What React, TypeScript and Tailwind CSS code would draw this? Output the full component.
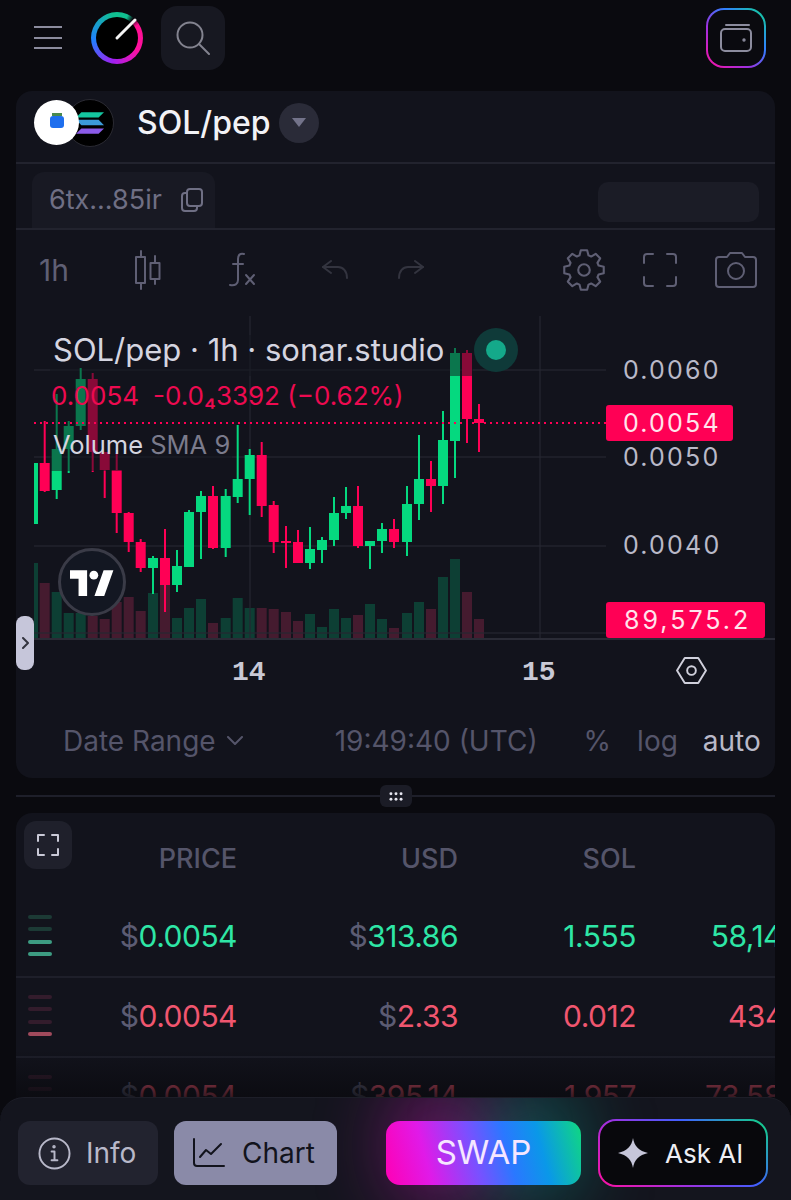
import React from 'react';

type Candle = [number, number, number, number, number, 'g' | 'r'];

const candles: Candle[] = [
  [36, 463, 524, 463, 524, 'g'],
  [44.7, 421, 492, 463, 491, 'r'],
  [56.7, 394, 499, 449, 490, 'g'],
  [68.7, 421, 473, 426, 449, 'g'],
  [80.7, 368, 430, 379, 426, 'g'],
  [92.7, 373, 472, 379, 452, 'r'],
  [104.7, 452, 498, 452, 470, 'r'],
  [116.7, 453, 533, 470, 513, 'r'],
  [128.7, 512, 552, 513, 542, 'r'],
  [140.7, 539, 572, 542, 568, 'r'],
  [153, 556, 594, 558, 568, 'g'],
  [165, 529, 612, 558, 585, 'r'],
  [177, 550, 592, 566, 585, 'g'],
  [189, 510, 567, 512, 567, 'g'],
  [201, 491, 559, 496, 512, 'g'],
  [213, 486, 549, 496, 548, 'r'],
  [225.7, 489, 557, 496, 548, 'g'],
  [237.7, 425, 503, 479, 497, 'g'],
  [249.7, 449, 515, 455, 479, 'g'],
  [261.7, 442, 517, 455, 506, 'r'],
  [273.7, 501, 553, 505, 542, 'r'],
  [286, 526, 568, 541, 543, 'r'],
  [298, 530, 563, 542, 563, 'r'],
  [310, 527, 569, 549, 563, 'g'],
  [322, 537, 563, 540, 550, 'g'],
  [334, 497, 546, 513, 540, 'g'],
  [346, 487, 519, 506, 513, 'g'],
  [358, 486, 548, 506, 546, 'r'],
  [370, 541, 569, 541, 546, 'g'],
  [382, 523, 553, 529, 541, 'g'],
  [394, 519, 548, 529, 542, 'r'],
  [407, 486, 556, 504, 542, 'g'],
  [419, 435, 520, 479, 504, 'g'],
  [431, 461, 512, 479, 486, 'r'],
  [443, 411, 504, 440, 486, 'g'],
  [455, 348, 478, 353, 441, 'g'],
  [467, 350, 443, 353, 419, 'r'],
  [479, 404, 452, 419, 423, 'r'],
];

const volumes: [number, number, 'g' | 'r'][] = [
  [36, 563, 'g'], [44.7, 583, 'r'], [56.7, 592, 'g'], [68.7, 613, 'g'], [80.7, 613, 'g'],
  [92.7, 616, 'r'], [104.7, 619, 'r'], [116.7, 602, 'r'], [128.7, 597, 'r'], [140.7, 611, 'r'],
  [153, 593, 'g'], [165, 585, 'r'], [177, 618, 'g'], [189, 608, 'g'], [201, 599, 'g'],
  [213, 623, 'r'], [225.7, 618, 'g'], [237.7, 598, 'g'], [249.7, 608, 'g'], [261.7, 608, 'r'],
  [273.7, 609, 'r'], [286, 612, 'r'], [298, 621, 'r'], [310, 614, 'g'], [322, 627, 'g'],
  [334, 609, 'g'], [346, 618, 'g'], [358, 615, 'r'], [370, 604, 'g'], [382, 619, 'g'],
  [394, 628, 'r'], [407, 613, 'g'], [419, 602, 'g'], [431, 609, 'r'], [443, 577, 'g'],
  [455, 559, 'g'], [467, 592, 'r'], [479, 619, 'r'],
];

const GREEN = '#05d97f';
const RED = '#ff0055';

// 8 tooth cog outline, centred on 20,20
const gearPath = () => {
  const pts: string[] = [];
  for (let i = 0; i < 8; i++) {
    const a = (i * Math.PI) / 4 - Math.PI / 2;
    const at = (r: number, d: number) =>
      `${(20 + r * Math.cos(a + d)).toFixed(1)} ${(20 + r * Math.sin(a + d)).toFixed(1)}`;
    pts.push(at(14.5, -0.3), at(19, -0.16), at(19, 0.16), at(14.5, 0.3));
  }
  return `M${pts.join('L')}Z`;
};

const ChartCanvas = () => (
  <svg viewBox="16 316 759 324" width="759" height="324" className="absolute inset-0">
    {volumes.map(([x, top, c], i) => (
      <rect key={i} x={i === 0 ? x - 2 : x - 5} y={top} width={i === 0 ? 4 : 10} height={639 - top} fill={c === 'g' ? '#0d3f34' : '#451b2f'} />
    ))}
    {[370, 457, 546, 633].map((y) => (
      <line key={y} x1="34" x2="606" y1={y} y2={y} stroke="#262732" strokeWidth="1.5" opacity="0.8" />
    ))}
    {[250, 540].map((x) => (
      <line key={x} x1={x} x2={x} y1="316" y2="640" stroke="#262732" strokeWidth="1.5" opacity="0.8" />
    ))}
    {candles.map(([x, wt, wb, bt, bb, c], i) => (
      <g key={i} fill={c === 'g' ? GREEN : RED}>
        <rect x={x - 1} y={wt} width="2" height={wb - wt} />
        <rect x={i === 0 ? x - 2 : x - 5} y={bt} width={i === 0 ? 4 : 10} height={bb - bt} />
      </g>
    ))}
    <rect x="50" y="335" width="423" height="41" fill="#12131c" opacity="0.5" />
    <rect x="50" y="376" width="182" height="95" fill="#12131c" opacity="0.5" />
    <line x1="34" x2="606" y1="423" y2="423" stroke={RED} strokeWidth="2" strokeDasharray="2 4" />
    <circle cx="496" cy="350" r="22" fill="#0f3a39" />
    <circle cx="496" cy="350" r="10" fill="#14a98a" />
  </svg>
);

const TvLogo = () => (
  <div className="absolute left-[42px] top-[232px] w-[68px] h-[68px] rounded-full border-[3px] border-[#3a3b47] bg-[#131722] flex items-center justify-center">
    <svg viewBox="0 0 36 22" width="44" height="27">
      <path d="M14 22H7V8H0V1h14v21zM28 22h-8l7.5-21h8L28 22z" fill="#fff" />
      <circle cx="19.5" cy="5" r="3.6" fill="#fff" />
    </svg>
  </div>
);

const Chart = () => (
  <div className="relative h-[324px] overflow-hidden">
    <ChartCanvas />
    <div className="absolute left-[37px] top-[14px] text-[31px] leading-[40px] text-[#d5d5e0] whitespace-nowrap">SOL/pep · 1h · sonar.studio</div>
    <div className="absolute left-[35px] top-[63px] text-[26px] leading-[34px] text-[#ed0a50] whitespace-nowrap">
      0.0054<span className="ml-[14px]">-0.0₄3392 (−0.62%)</span>
    </div>
    <div className="absolute left-[37px] top-[112px] text-[25.500px] leading-[34px] text-[#d5d5e0] whitespace-nowrap">
      Volume <span className="text-[#7b7b8c]">SMA 9</span>
    </div>
    <TvLogo />
    <div className="absolute left-[607px] top-[37px] text-[25px] leading-[34px] tracking-[2.2px] text-[#b9b9c8]">0.0060</div>
    <div className="absolute left-[607px] top-[124px] text-[25px] leading-[34px] tracking-[2.2px] text-[#b9b9c8]">0.0050</div>
    <div className="absolute left-[607px] top-[212px] text-[25px] leading-[34px] tracking-[2.2px] text-[#b9b9c8]">0.0040</div>
    <div className="absolute left-[590px] top-[89px] w-[127px] h-[36px] rounded-[3px] bg-[#ff0055] pl-[17px] text-[25px] leading-[36px] tracking-[2.2px] text-[#ffe4ec]">0.0054</div>
    <div className="absolute left-[590px] top-[286px] w-[159px] h-[36px] rounded-[3px] bg-[#ff0055] pl-[18px] text-[25px] leading-[36px] tracking-[3px] text-[#ffe4ec]">89,575.2</div>
    <div className="absolute left-0 right-0 bottom-0 h-[2px] bg-[#2a2b36]" />
  </div>
);

const stroke = {
  fill: 'none',
  stroke: 'currentColor',
  strokeWidth: 2,
  strokeLinecap: 'round' as const,
  strokeLinejoin: 'round' as const,
};

const Toolbar = () => (
  <div className="h-[86px] flex items-center pl-[23px] pr-[18px] pb-[6px] text-[#5f5f74]">
    <span className="text-[30px] w-[31px] whitespace-nowrap leading-none">1h</span>
    <svg viewBox="0 0 28 40" width="28" height="40" className="ml-[64px]" {...stroke}>
      <path d="M7 1v6M7 33v6M21 6v7M21 29v5" />
      <rect x="2" y="7" width="9" height="26" />
      <rect x="16.500" y="13" width="9" height="16" />
    </svg>
    <svg viewBox="0 0 28 36" width="28" height="36" className="ml-[66px]" {...stroke}>
      <path d="M16 2c-4-1-6 1-6 5v21c0 4-3 6-8 5" />
      <path d="M5 12h10" />
      <path d="M18 23l8 9M26 23l-8 9" />
    </svg>
    <svg viewBox="0 0 26 20" width="26" height="20" className="ml-[66px] text-[#33343f]" {...stroke}>
      <path d="M9 1L1 7l8 6" />
      <path d="M1 7h15c5 0 9 4 9 11" />
    </svg>
    <svg viewBox="0 0 26 20" width="26" height="20" className="ml-[50px] text-[#33343f]" {...stroke}>
      <path d="M17 1l8 6-8 6" />
      <path d="M25 7H10C5 7 1 11 1 18" />
    </svg>
    <div className="ml-auto flex items-center">
      <svg viewBox="0 0 40 40" width="42" height="42" {...stroke}>
        <circle cx="20" cy="20" r="5.500" />
        <path d={gearPath()} />
      </svg>
      <svg viewBox="0 0 34 34" width="34" height="34" className="ml-[38px]" {...stroke}>
        <path d="M1 10V4c0-2 1-3 3-3h6M24 1h6c2 0 3 1 3 3v6M33 24v6c0 2-1 3-3 3h-6M10 33H4c-2 0-3-1-3-3v-6" />
      </svg>
      <svg viewBox="0 0 42 36" width="42" height="36" className="ml-[38px]" {...stroke}>
        <path d="M4 5h8l3-4h12l3 4h8c2 0 3 1 3 3v24c0 2-1 3-3 3H4c-2 0-3-1-3-3V8c0-2 1-3 3-3z" />
        <circle cx="21" cy="19" r="8" />
      </svg>
    </div>
  </div>
);

const rows = [
  { color: 'text-[#2ee6a6]', price: '0.0054', usd: '313.86', sol: '1.555', amt: '58,143', bars: ['#1c3a35', '#1c3a35', '#3d9c82', '#3d9c82'] },
  { color: 'text-[#f0566f]', price: '0.0054', usd: '2.33', sol: '0.012', amt: '434.1', bars: ['#331c2c', '#331c2c', '#331c2c', '#a04a5c'] },
  { color: 'text-[#f0566f]', price: '0.0054', usd: '395.14', sol: '1.957', amt: '73,586', bars: ['#331c2c', '#331c2c', '#331c2c', '#331c2c'] },
];

const Trades = () => (
  <div className="mt-[16px] mx-[16px] rounded-t-[16px] bg-[#12131c] overflow-hidden">
    <div className="relative h-[85px] grid grid-cols-[221px_221px_178px_164px] items-center text-[27px] font-medium text-[#55556a] text-right pt-[8px]">
      <button className="absolute left-[8px] top-[8px] w-[48px] h-[48px] rounded-[12px] bg-[#1f202b] flex items-center justify-center text-[#c9c9d6]">
        <svg viewBox="0 0 22 22" width="22" height="22" {...stroke}>
          <path d="M1 7V1h6M15 1h6v6M21 15v6h-6M7 21H1v-6" />
        </svg>
      </button>
      <span>PRICE</span>
      <span>USD</span>
      <span>SOL</span>
      <span />
    </div>
    {rows.map((r, i) => (
      <div key={i} className="relative h-[80px] border-b-2 border-[#1e1f2a] grid grid-cols-[221px_221px_178px_164px] items-center text-right text-[30px] tracking-[-0.5px] whitespace-nowrap pb-[2px]">
        <div className="absolute left-[12px] top-[17px] flex flex-col gap-[8.300px]">
          {r.bars.map((b, j) => (
            <svg key={j} width="24" height="4" className="block"><rect width="24" height="4" rx="2" fill={b} /></svg>
          ))}
        </div>
        <span className={r.color}><span className="text-[#5c5c73]">$</span>{r.price}</span>
        <span className={r.color}><span className="text-[#5c5c73]">$</span>{r.usd}</span>
        <span className={r.color}>{r.sol}</span>
        <span className={r.color}>{r.amt}</span>
      </div>
    ))}
  </div>
);

const BottomBar = () => (
  <>
    <div className="absolute left-0 right-0 top-[1050px] h-[50px] bg-gradient-to-b from-transparent to-[#0a0a0f]/85" />
    <div className="absolute left-0 right-0 top-[1097px] bottom-0 rounded-t-[24px] bg-[#14151e] border-t border-[#1d1e28] overflow-hidden">
      <div className="absolute left-[395px] top-[-15px] w-[95px] h-[125px] rounded-full bg-[#d016b8] opacity-50 blur-2xl" />
      <div className="absolute left-[490px] top-[-15px] w-[85px] h-[125px] rounded-full bg-[#0c9c90] opacity-50 blur-2xl" />
    </div>
    <div className="absolute left-[18px] right-[23px] top-[1119px] h-[68px] flex items-center">
      <button className="w-[140px] h-[64px] rounded-[12px] bg-[#22232f] flex items-center pl-[20px] text-[#b8b8c9] text-[28px]">
        <svg viewBox="0 0 34 34" width="33" height="33" className="mr-[15px]" {...stroke}>
          <circle cx="17" cy="17" r="15.500" />
          <path d="M14 15h3v9M14 24h6" />
          <circle cx="16.500" cy="10" r="0.800" />
        </svg>
        Info
      </button>
      <button className="ml-[16px] w-[163px] h-[64px] rounded-[12px] bg-[#8a8aa8] flex items-center pl-[19px] text-[#12131c] text-[28px]">
        <svg viewBox="0 0 32 30" width="32" height="30" className="mr-[17px]" {...stroke}>
          <path d="M1 1v24c0 2 1 3 3 3h27" />
          <path d="M7 19l6-7 5 4 10-10" />
        </svg>
        Chart
      </button>
      <button className="ml-[49px] w-[195px] h-[64px] rounded-[14px] bg-[linear-gradient(75deg,#ff00b4_0%,#e01ae8_22%,#7a50ff_45%,#2a78ff_62%,#0a98e8_78%,#10d880_100%)] text-[33px] text-[#f6e6ff] flex items-center justify-center">
        SWAP
      </button>
      <div className="ml-[17px] w-[170px] h-[68px] rounded-[18px] p-[2px] bg-[linear-gradient(40deg,#ff10a0_0%,#a030e0_35%,#4060ff_65%,#10d880_100%)]">
        <button className="w-full h-full rounded-[16px] bg-[#08080c] flex items-center pl-[18px] text-[26px] text-[#eeeef4]">
          <svg viewBox="0 0 30 30" width="30" height="30" className="mr-[17px]">
            <path d="M15 0c1.200 8 6 13 15 15-9 2-13.800 7-15 15-1.200-8-6-13-15-15 9-2 13.800-7 15-15z" fill="#c6c6da" />
          </svg>
          Ask AI
        </button>
      </div>
    </div>
  </>
);

const App = () => (
  <div className="relative h-[1200px] w-[791px] overflow-hidden bg-[#0a0a0f] font-['Inter',sans-serif]">
    <header className="h-[91px] flex items-start">
      <div className="ml-[34px] mt-[26px] w-[28px] flex flex-col gap-[8.500px]">
        <div className="h-[2px] bg-[#8c8c9e]" />
        <div className="h-[2px] bg-[#8c8c9e]" />
        <div className="h-[2px] bg-[#8c8c9e]" />
      </div>
      <div className="relative ml-[29px] mt-[12px] w-[52px] h-[52px] rounded-full bg-[conic-gradient(from_40deg,#0a0a0f_0deg,#ff0f90_18deg,#ff10a0_80deg,#a020f0_150deg,#2080ff_225deg,#10c090_310deg,#10c090_345deg,#0a0a0f_360deg)] flex items-center justify-center">
        <div className="w-[42px] h-[42px] rounded-full bg-black" />
        <svg viewBox="0 0 52 52" width="52" height="52" className="absolute inset-0">
          <line x1="26" y1="26" x2="44" y2="8" stroke="#f4f4f4" strokeWidth="3" strokeLinecap="round" />
        </svg>
      </div>
      <button className="ml-[18px] mt-[6px] w-[64px] h-[64px] rounded-[16px] bg-[#171821] flex items-center justify-center text-[#83838f]">
        <svg viewBox="0 0 34 34" width="34" height="34" {...stroke}>
          <circle cx="14" cy="14" r="12.500" />
          <path d="M23 23l10 10" />
        </svg>
      </button>
      <div className="ml-auto mr-[25px] mt-[8px] w-[60px] h-[60px] rounded-[18px] p-[2px] bg-[linear-gradient(45deg,#ff10a0_0%,#a030e0_35%,#3080ff_65%,#10d890_100%)]">
        <div className="w-full h-full rounded-[16px] bg-[#0a0a0f] flex items-center justify-center text-[#8c8c9e]">
          <svg viewBox="0 0 32 28" width="32" height="28" {...stroke}>
            <path d="M6 1h23" />
            <rect x="1" y="5" width="30" height="22" rx="4" />
            <circle cx="24" cy="16" r="0.700" />
          </svg>
        </div>
      </div>
    </header>

    <section className="mx-[16px] h-[687px] rounded-[16px] bg-[#12131c]">
      <div className="h-[73px] flex items-center border-b-2 border-[#22232e] pb-[8px]">
        <div className="relative ml-[18px] w-[80px] h-[48px]">
          <div className="absolute left-[32px] top-0 w-[48px] h-[48px] rounded-full bg-black border border-[#2a2a32] flex items-center justify-center">
            <svg viewBox="0 0 26 22" width="28" height="24">
              <path d="M5 1h21l-5 5H0z" fill="#14c6a0" />
              <path d="M0 8h21l5 5H5z" fill="#3c9ad8" />
              <path d="M5 16h21l-5 5H0z" fill="#8b5be8" />
            </svg>
          </div>
          <div className="absolute left-0 top-[1px] w-[45px] h-[45px] rounded-full bg-white flex items-center justify-center">
            <div className="relative w-[14px] h-[12px] rounded-[3px] bg-[#1f6fee]">
              <div className="absolute left-[2px] -top-[3px] w-[10px] h-[3px] bg-[#4a8a50]" />
            </div>
          </div>
        </div>
        <span className="ml-[23px] text-[32px] font-medium text-[#f2f2f6]">SOL/pep</span>
        <button className="ml-[9px] w-[40px] h-[40px] rounded-full bg-[#2a2b38] flex items-center justify-center">
          <svg viewBox="0 0 14 9" width="14" height="9"><path d="M0 0h14L7 9z" fill="#73738a" /></svg>
        </button>
      </div>

      <div className="h-[66px] pl-[16px] pr-[16px] flex justify-between items-end border-b-2 border-[#22232e]">
        <div className="h-[56px] w-[183px] rounded-t-[12px] bg-[#181923] flex items-center pl-[17px] text-[#6f6f84] text-[27px]">
          6tx...85ir
          <svg viewBox="0 0 22 24" width="22" height="24" className="ml-[19px]" {...stroke}>
            <rect x="6" y="1" width="15" height="17" rx="3" />
            <path d="M6 5H4C2 5 1 6 1 8v12c0 2 1 3 3 3h9c2 0 3-1 3-3v-2" />
          </svg>
        </div>
        <div className="self-start mt-[18px] w-[161px] h-[40px] rounded-[10px] bg-[#1b1c26]" />
      </div>

      <Toolbar />
      <Chart />

      <div className="relative h-[63px] text-[#c9c9d6] font-['Liberation_Mono',monospace] font-bold text-[28px]">
        <span className="absolute left-[216px] top-[12px]">14</span>
        <span className="absolute left-[506px] top-[12px]">15</span>
        <svg viewBox="0 0 32 28" width="31" height="27" className="absolute left-[660px] top-[17px] text-[#d0d0dc]" {...stroke}>
          <path d="M9 1h14l8 13-8 13H9L1 14z" />
          <circle cx="16" cy="14" r="4.500" />
        </svg>
      </div>

      <div className="h-[75px] flex items-center text-[28px] text-[#55556a] whitespace-nowrap">
        <span className="ml-[47px]">Date Range</span>
        <svg viewBox="0 0 16 9" width="16" height="9" className="ml-[11px]" {...stroke}>
          <path d="M1 1l7 7 7-7" />
        </svg>
        <span className="ml-[92px]">19:49:40 (UTC)</span>
        <span className="ml-[46px]">%</span>
        <span className="ml-[26px]">log</span>
        <span className="ml-[25px] text-[#b9b9c8]">auto</span>
      </div>
    </section>

    <div className="relative mt-[17px] mx-[16px] h-[2px] bg-[#1e1f2a]">
      <div className="absolute left-[364px] top-[-10px] w-[32px] h-[22px] rounded-[6px] bg-[#1b1c26] flex items-center justify-center">
        <svg viewBox="0 0 12 8" width="14" height="9" fill="#e6e6f0">
          <circle cx="1.500" cy="1.500" r="1.300" /><circle cx="6" cy="1.500" r="1.300" /><circle cx="10.500" cy="1.500" r="1.300" />
          <circle cx="1.500" cy="6.500" r="1.300" /><circle cx="6" cy="6.500" r="1.300" /><circle cx="10.500" cy="6.500" r="1.300" />
        </svg>
      </div>
    </div>

    <Trades />
    <BottomBar />

    <div className="absolute left-[16px] top-[616px] w-[18px] h-[54px] rounded-[8px] bg-[#c6c6da] flex items-center justify-center text-[#33343f]">
      <svg viewBox="0 0 7 12" width="7" height="12" {...stroke}>
        <path d="M1 1l5 5-5 5" />
      </svg>
    </div>
  </div>
);

export default App;
